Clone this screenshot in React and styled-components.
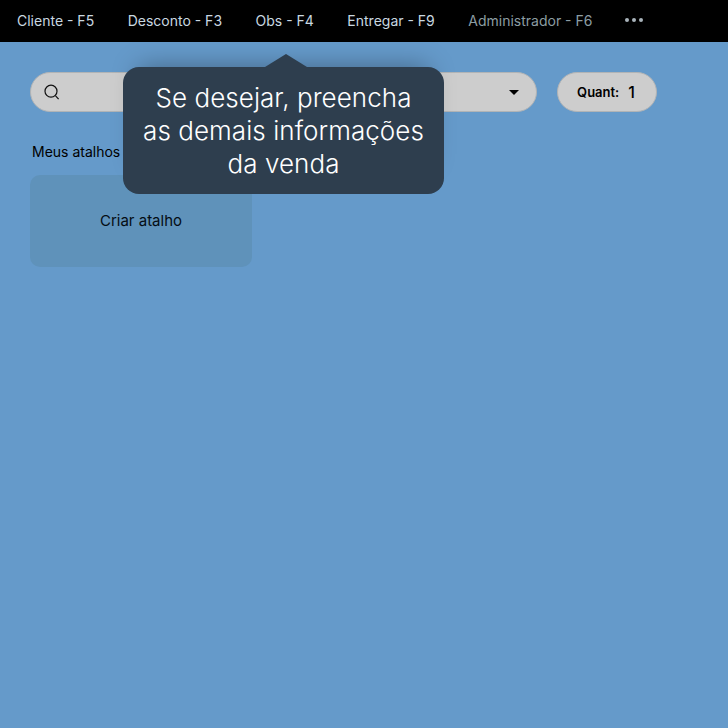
import React from 'react'
import styled, { createGlobalStyle } from 'styled-components'

const GlobalStyle = createGlobalStyle`
    html, body {
        margin: 0;
        padding: 0;
        height: 100%;
    }
    body {
        background: #659aca;
        font-family: Inter, "Noto Sans", sans-serif;
    }
`

const Page = styled.div`
    width: 728px;
    height: 728px;
    overflow: hidden;
    position: relative;
    background: #659aca;
`

const TopBar = styled.nav`
    display: flex;
    align-items: center;
    box-sizing: border-box;
    height: 42px;
    padding: 0 0 1px 17px;
    gap: 33.5px;
    background: #000;
`

const MenuItem = styled.span`
    font-size: 14px;
    white-space: nowrap;
    color: ${p => p.$muted ? '#8c9da3' : '#c9d8e0'};
`

const Dots = styled.span`
    display: flex;
    gap: 3px;
    margin-left: -1px;
    margin-bottom: 1px;
`

const Dot = styled.i`
    width: 4px;
    height: 4px;
    border-radius: 50%;
    background: #a9b4bb;
`

const Content = styled.main`
    padding: 30px 30px 0;
`

const SearchRow = styled.div`
    display: flex;
    gap: 20px;
`

const Pill = styled.div`
    display: flex;
    align-items: center;
    box-sizing: border-box;
    height: 40px;
    background: #cdcdcd;
    border: 1px solid #b1b4b6;
    border-radius: 20px;
`

const SearchBox = styled(Pill)`
    width: 507px;
    justify-content: space-between;
    padding: 0 17px 0 13px;
`

const Caret = styled.span`
    width: 0;
    height: 0;
    border-left: 5px solid transparent;
    border-right: 5px solid transparent;
    border-top: 5px solid #000;
`

const QuantBox = styled(Pill)`
    width: 100px;
    justify-content: center;
    gap: 9px;
    padding-right: 2px;
    color: #000;
`

const QuantLabel = styled.span`
    font-size: 13px;
    font-weight: 600;
`

const QuantValue = styled.span`
    font-size: 16px;
    font-weight: 500;
`

const SectionTitle = styled.h2`
    margin: 31px 0 0 2px;
    font-size: 14px;
    line-height: 18px;
    font-weight: 400;
    color: #000;
`

const ShortcutCard = styled.div`
    display: flex;
    justify-content: center;
    padding-top: 37px;
    box-sizing: border-box;
    width: 222px;
    height: 92px;
    margin-top: 14px;
    background: #5f92ba;
    border-radius: 10px;
    font-size: 15px;
    line-height: 18px;
    color: #050d14;
`

const Tooltip = styled.div`
    position: absolute;
    left: 123px;
    top: 67px;
    box-sizing: border-box;
    width: 321px;
    height: 127px;
    padding-top: 14px;
    background: #2e3e4e;
    border-radius: 16px;
    color: #fff;
    font-size: 26px;
    line-height: 33px;
    font-weight: 300;
    letter-spacing: 0.06px;
    text-align: center;
    box-shadow: 0 -16px 24px -16px rgba(0, 0, 0, 0.35);

    &::before {
        content: '';
        position: absolute;
        left: 142px;
        top: -13px;
        width: 0;
        height: 0;
        border-left: 21px solid transparent;
        border-right: 21px solid transparent;
        border-bottom: 13px solid #2e3e4e;
    }
`

const SearchIcon = () => (
    <svg width="16" height="16" viewBox="0 0 16 16" fill="none" stroke="#111" strokeWidth="1.2">
        <circle cx="7" cy="7.2" r="6" />
        <path d="M11.4 11.6 L14.6 15.2" />
    </svg>
)

export default function App() {
    return (
        <Page>
            <GlobalStyle />
            <TopBar>
                <MenuItem>Cliente - F5</MenuItem>
                <MenuItem>Desconto - F3</MenuItem>
                <MenuItem>Obs - F4</MenuItem>
                <MenuItem>Entregar - F9</MenuItem>
                <MenuItem $muted>Administrador - F6</MenuItem>
                <Dots><Dot /><Dot /><Dot /></Dots>
            </TopBar>
            <Content>
                <SearchRow>
                    <SearchBox>
                        <SearchIcon />
                        <Caret />
                    </SearchBox>
                    <QuantBox>
                        <QuantLabel>Quant:</QuantLabel>
                        <QuantValue>1</QuantValue>
                    </QuantBox>
                </SearchRow>
                <SectionTitle>Meus atalhos</SectionTitle>
                <ShortcutCard>Criar atalho</ShortcutCard>
            </Content>
            <Tooltip>
                Se desejar, preencha<br />
                as demais informações<br />
                da venda
            </Tooltip>
        </Page>
    )
}
